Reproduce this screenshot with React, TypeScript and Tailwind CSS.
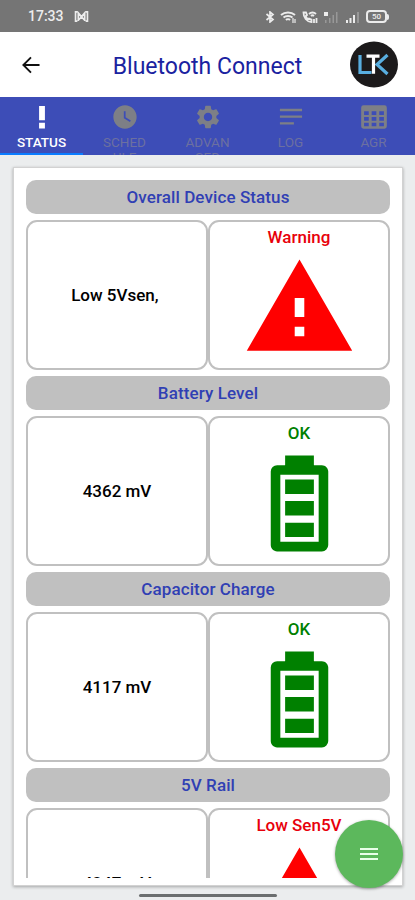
import React from "react";

type Section = {
  title: string;
  value: string;
  status: string;
  ok: boolean;
};

const sections: Section[] = [
  { title: "Overall Device Status", value: "Low 5Vsen, ", status: "Warning", ok: false },
  { title: "Battery Level", value: "4362 mV", status: "OK", ok: true },
  { title: "Capacitor Charge", value: "4117 mV", status: "OK", ok: true },
  { title: "5V Rail", value: "4247 mV", status: "Low Sen5V", ok: false },
];

const tabs = [
  { label: "STATUS", path: "M9.500 2.500h5v12.300h-5zM9.500 17h5v4.800h-5z" },
  {
    label: "SCHED ULE",
    path: "M12 2C6.5 2 2 6.5 2 12s4.5 10 10 10 10-4.500 10-10S17.500 2 12 2zm4.200 14.200L11 13V7h1.500v5.200l4.500 2.700-.8 1.300z",
  },
  {
    label: "ADVAN CED",
    path: "M19.140 12.940c.04-.3.06-.61.06-.94 0-.32-.02-.64-.07-.94l2.030-1.580c.18-.14.23-.41.12-.61l-1.920-3.320c-.12-.22-.37-.29-.59-.22l-2.390.96c-.5-.38-1.030-.7-1.620-.94l-.36-2.540c-.04-.24-.24-.41-.48-.41h-3.840c-.24 0-.43.17-.47.41l-.36 2.540c-.59.24-1.130.57-1.620.94l-2.390-.96c-.22-.08-.47 0-.59.22L2.740 8.870c-.12.21-.08.47.12.61l2.030 1.580c-.05.3-.09.63-.09.94s.02.64.07.94l-2.030 1.580c-.18.14-.23.41-.12.61l1.920 3.320c.12.22.37.29.59.22l2.390-.96c.5.38 1.030.7 1.620.94l.36 2.540c.05.24.24.41.48.41h3.840c.24 0 .44-.17.47-.41l.36-2.540c.59-.24 1.130-.56 1.620-.94l2.390.96c.22.08.47 0 .59-.22l1.920-3.320c.12-.22.07-.47-.12-.61l-2.010-1.580zM12 15.600c-1.980 0-3.600-1.620-3.600-3.600s1.620-3.600 3.600-3.600 3.600 1.620 3.600 3.600-1.620 3.600-3.600 3.600z",
  },
  { label: "LOG", path: "M2.500 18.500h12v-2h-12v2zM2.500 5v2h19V5h-19zm0 7.700h19v-2h-19v2z" },
  {
    label: "AGR",
    path: "M3 2h18a2 2 0 0 1 2 2v16a2 2 0 0 1-2 2H3a2 2 0 0 1-2-2V4a2 2 0 0 1 2-2zM3.500 7v3.200h4V7zM10 7v3.200h4V7zM16.500 7v3.200h4V7zM3.500 12v3.200h4V12zM10 12v3.200h4V12zM16.500 12v3.200h4V12zM3.500 17v3h4v-3zM10 17v3h4v-3zM16.500 17v3h4v-3z",
  },
];

const StatusBar = () => (
  <div className="h-8 shrink-0 bg-[#757575] flex items-center pl-7 pr-[26px] pt-px text-[#ececec]">
    <span className="text-[14px] font-medium">17:33</span>
    <svg className="ml-2.5 w-[15px] h-[11px]" viewBox="0 0 15 12" fill="none" stroke="currentColor" strokeWidth="1.800">
      <path d="M3 1H1v10h2M12 1h2v10h-2M4 11V2l3.500 4L11 2v9M4 10l7-7M4 3l7 7" />
    </svg>
    <div className="ml-auto flex items-center gap-[5.5px]">
      <svg className="w-[10px] h-3" viewBox="0 0 9 12" fill="none" stroke="currentColor" strokeWidth="1.700">
        <path d="M1 3l6.500 5.500-3 2.500V1l3 2.500L1 9" />
      </svg>
      <svg className="w-4 h-3" viewBox="0 0 16 12" fill="none" stroke="currentColor" strokeWidth="2">
        <path d="M1 4c4-3.500 10-3.500 14 0M3.500 6.500c2.500-2 6.500-2 9 0M6 9c1-1 3-1 4 0" />
        <path d="M13 7v5M15 8v4" strokeWidth="1.200" />
      </svg>
      <svg className="w-4 h-3" viewBox="0 0 16 12" fill="none" stroke="currentColor" strokeWidth="1.800">
        <path d="M1.500 1.500c0 5 3 9 8 9.500V8.500L7 7.500 6 8.500C5 7.500 4 6 3.800 5L5 4 4 1.500zM7 3c2-2 5-2 7 0M9 5c1-1 2-1 3 0" />
        <path d="M12 12V8M14.500 12V7" />
      </svg>
      <svg className="w-4 h-3" viewBox="0 0 16 12" fill="currentColor">
        <path d="M1 1h4v4H1z" />
        <path d="M2 9h1.500v3H2zM6 7h1.500v5H6zM9.500 4H11v8H9.500zM13 1h1.500v11H13z" opacity="0.3" />
      </svg>
      <svg className="w-4 h-3" viewBox="0 0 16 12" fill="currentColor">
        <path d="M1 9h2v3H1zM4.500 7h2v5h-2zM8 4h2v8H8z" />
        <path d="M12 1h2v11h-2z" opacity="0.3" />
      </svg>
      <div className="flex items-center">
        <div className="w-[21px] h-[13px] rounded-[4px] border-2 border-current flex items-center justify-center text-[8px] font-medium">
          50
        </div>
        <div className="w-0.5 h-1.5 rounded-r bg-current" />
      </div>
    </div>
  </div>
);

const Logo = () => (
  <svg className="w-12 h-[47px]" viewBox="0 0 48 47">
    <ellipse cx="24" cy="23.500" rx="24" ry="23" fill="#1c1a1b" />
    <g fill="none" strokeWidth="3.200">
      <path d="M10 14v17.500h11.500M37.500 14L27 23.500l10.500 9.500" stroke="#58aee0" />
      <path d="M16.500 15.200h13M23.500 14v18.800" stroke="#fff" />
    </g>
  </svg>
);

const StatusIcon: React.FC<{ ok: boolean }> = ({ ok }) => (
  <svg className={`w-[115px] h-[115px] shrink-0 ${ok ? "text-[#008000]" : "text-[#ff0000]"}`} viewBox="0 0 24 24" fill="currentColor">
    {ok ? (
      <path d="M16 20H8V6h8m.670-2H15V2H9v2H7.330A1.330 1.330 0 0 0 6 5.330v15.340C6 21.400 6.600 22 7.330 22h9.340A1.330 1.330 0 0 0 18 20.670V5.330C18 4.600 17.400 4 16.670 4M15 16H9v3h6v-3m0-9H9v3h6V7m0 4.500H9v3h6v-3z" />
    ) : (
      <path d="M1 21h22L12 2 1 21zm12-3h-2v-2h2v2zm0-4h-2v-4h2v4z" />
    )}
  </svg>
);

const SectionBlock: React.FC<{ section: Section }> = ({ section }) => (
  <div className="flex flex-col gap-1.5 shrink-0">
    <div className="h-[34px] rounded-[10px] bg-[#c0c0c0] flex items-center justify-center text-[17px] tracking-[0.1px] font-medium text-[#303fb4] pt-0.5">
      {section.title}
    </div>
    <div className="flex h-[150px] text-[17px] font-medium">
      <div className="w-1/2 rounded-[11px] border-2 border-[#c0c0c0] flex items-center justify-center text-black whitespace-pre pt-px">
        {section.value}
      </div>
      <div className="w-1/2 rounded-[11px] border-2 border-[#c0c0c0] flex flex-col items-center">
        <span className={`h-7 pt-[3px] ${section.ok ? "text-[#008000]" : "text-[#e8000b]"}`}>{section.status}</span>
        <StatusIcon ok={section.ok} />
      </div>
    </div>
  </div>
);

const App = () => {
  return (
    <div className="relative w-full h-[900px] overflow-hidden flex flex-col bg-[#ebedee] font-['Roboto',sans-serif]">
      <StatusBar />

      <header className="h-[65px] shrink-0 bg-white flex items-center pl-[21px] pr-[17px]">
        <svg className="w-[19px] h-[18px]" viewBox="0 0 20 18" fill="none" stroke="#111" strokeWidth="2">
          <path d="M19.500 9H2.500M10.500 1L2.500 9l8 8" />
        </svg>
        <h1 className="flex-1 text-center text-[23px] text-[#1a22a0] pl-[25px] pt-1.5">Bluetooth Connect</h1>
        <Logo />
      </header>

      <nav className="h-[58px] shrink-0 bg-[#3d4db7] flex overflow-hidden">
        {tabs.map((tab, i) => (
          <button
            key={tab.label}
            className={`w-[83px] h-[58px] overflow-hidden flex flex-col items-center pt-1.5 ${
              i === 0 ? "text-white border-b-2 border-[#0a7cff]" : "text-[#7d7f86]"
            }`}
          >
            <svg className="w-7 h-7 shrink-0" viewBox="0 0 24 24" fill="currentColor" fillRule="evenodd">
              <path d={tab.path} />
            </svg>
            <span className={`w-[50px] text-[13.5px] leading-[15px] pt-1 text-center ${i === 0 ? "font-medium" : "text-[#6c70a0]"}`}>
              {tab.label}
            </span>
          </button>
        ))}
      </nav>

      <main className="mt-3 ml-[13px] w-[390px] h-[719px] shrink-0 bg-white border border-[#d2d2d2] shadow-[0_1px_3px_rgba(0,0,0,0.3)] px-3 pt-3 pb-[7px]">
        <div className="h-full overflow-hidden flex flex-col gap-1.5">
          {sections.map((section) => (
            <SectionBlock key={section.title} section={section} />
          ))}
        </div>
      </main>

      <div className="mt-2 mx-auto w-[138px] h-[3px] shrink-0 rounded-full bg-[#6b6e6f]" />

      <button className="absolute left-[335px] top-[820px] w-[68px] h-[68px] rounded-full bg-[#5cb85c] flex items-center justify-center shadow-[0_1px_3px_rgba(0,0,0,0.35)]">
        <svg className="w-[18px] h-3.5" viewBox="0 0 18 14" stroke="#e8ffe8" strokeWidth="2">
          <path d="M0 2h18M0 7h18M0 12h18" />
        </svg>
      </button>
    </div>
  );
};

export default App;
